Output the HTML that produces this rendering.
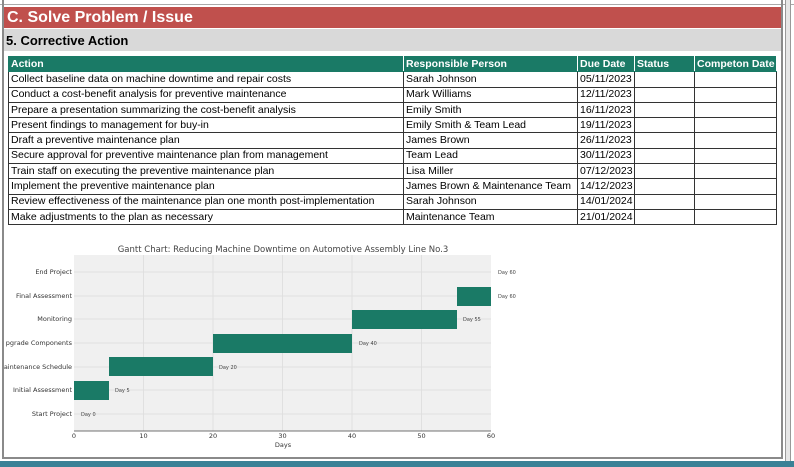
<!DOCTYPE html>
<html><head><meta charset="utf-8"><style>
*{margin:0;padding:0;box-sizing:border-box}
body{width:794px;height:467px;background:#fff;font-family:"Liberation Sans",Calibri,sans-serif;position:relative;overflow:hidden}
.frame{position:absolute;left:2px;top:0;width:781px;height:459px;border-left:2px solid #8a8a8a;border-right:2px solid #8a8a8a;border-bottom:2px solid #8a8a8a}
.topline{position:absolute;left:0;top:0;width:794px;height:5px;background:#fff;border-bottom:1px solid #aaa}
.red{position:absolute;left:4px;top:7px;width:777px;height:21px;background:#c0504d;color:#fff;font-weight:bold;font-size:16px;line-height:21px;padding-left:3px}
.gray{position:absolute;left:4px;top:29px;width:777px;height:22px;background:#d9d9d9;font-weight:bold;font-size:13px;line-height:24px;padding-left:2px}
table{position:absolute;left:8px;top:56px;width:768px;border-collapse:collapse;font-size:10.5px;table-layout:fixed}
td{border:1px solid #333;height:15.3px;line-height:13px;padding:0 2px;white-space:nowrap;overflow:hidden}
tr.h td{background:#1a7a66;color:#fff;font-weight:bold;border-color:#1a7a66;border-right:1px solid #fff}
.rs{position:absolute;left:785px;top:0;width:6px;height:467px;background:#e6e6e6;border-left:1px solid #999;border-right:1px solid #999}
.teal{position:absolute;left:0;top:461px;width:794px;height:6px;background:#3a8196}
</style></head><body>
<div class="topline"></div>
<div class="frame"></div>
<div class="rs"></div>
<div class="red">C. Solve Problem / Issue</div>
<div class="gray">5. Corrective Action</div>
<table>
<colgroup><col style="width:395px"><col style="width:174px"><col style="width:57px"><col style="width:60px"><col style="width:82px"></colgroup>
<tr class="h"><td>Action</td><td>Responsible Person</td><td>Due Date</td><td>Status</td><td>Competon Date</td></tr>
<tr><td>Collect baseline data on machine downtime and repair costs</td><td>Sarah Johnson</td><td>05/11/2023</td><td></td><td></td></tr>
<tr><td>Conduct a cost-benefit analysis for preventive maintenance</td><td>Mark Williams</td><td>12/11/2023</td><td></td><td></td></tr>
<tr><td>Prepare a presentation summarizing the cost-benefit analysis</td><td>Emily Smith</td><td>16/11/2023</td><td></td><td></td></tr>
<tr><td>Present findings to management for buy-in</td><td>Emily Smith &amp; Team Lead</td><td>19/11/2023</td><td></td><td></td></tr>
<tr><td>Draft a preventive maintenance plan</td><td>James Brown</td><td>26/11/2023</td><td></td><td></td></tr>
<tr><td>Secure approval for preventive maintenance plan from management</td><td>Team Lead</td><td>30/11/2023</td><td></td><td></td></tr>
<tr><td>Train staff on executing the preventive maintenance plan</td><td>Lisa Miller</td><td>07/12/2023</td><td></td><td></td></tr>
<tr><td>Implement the preventive maintenance plan</td><td>James Brown &amp; Maintenance Team</td><td>14/12/2023</td><td></td><td></td></tr>
<tr><td>Review effectiveness of the maintenance plan one month post-implementation</td><td>Sarah Johnson</td><td>14/01/2024</td><td></td><td></td></tr>
<tr><td>Make adjustments to the plan as necessary</td><td>Maintenance Team</td><td>21/01/2024</td><td></td><td></td></tr>
</table>
<svg style="position:absolute;left:0;top:0" width="794" height="467" font-family="DejaVu Sans,sans-serif">
<rect x="74" y="255" width="417" height="176" fill="#f0f0f0"/>
<g stroke="#ddd" stroke-width="0.8">
<line x1="143.5" y1="255" x2="143.5" y2="431"/><line x1="213" y1="255" x2="213" y2="431"/><line x1="282.5" y1="255" x2="282.5" y2="431"/><line x1="352" y1="255" x2="352" y2="431"/><line x1="421.5" y1="255" x2="421.5" y2="431"/>
<line x1="74" y1="272" x2="491" y2="272"/><line x1="74" y1="296" x2="491" y2="296"/><line x1="74" y1="319" x2="491" y2="319"/><line x1="74" y1="343" x2="491" y2="343"/><line x1="74" y1="367" x2="491" y2="367"/><line x1="74" y1="390" x2="491" y2="390"/><line x1="74" y1="414" x2="491" y2="414"/>
</g>
<g fill="#1a7a66">
<rect x="74" y="381" width="35" height="19"/>
<rect x="109" y="357" width="104" height="19"/>
<rect x="213" y="334" width="139" height="19"/>
<rect x="352" y="310" width="105" height="19"/>
<rect x="457" y="287" width="34" height="19"/>
</g>
<line x1="74" y1="431" x2="491" y2="431" stroke="#444" stroke-width="0.8"/>
<text x="283" y="252" font-size="8.5" fill="#444" text-anchor="middle">Gantt Chart: Reducing Machine Downtime on Automotive Assembly Line No.3</text>
<g font-size="6.5" fill="#333" text-anchor="end">
<text x="72" y="274">End Project</text><text x="72" y="298">Final Assessment</text><text x="72" y="321">Monitoring</text><text x="72" y="345">pgrade Components</text><text x="72" y="369">aintenance Schedule</text><text x="72" y="392">Initial Assessment</text><text x="72" y="416">Start Project</text>
</g>
<g font-size="5" fill="#444">
<text x="81" y="416">Day 0</text><text x="115" y="392">Day 5</text><text x="219" y="369">Day 20</text><text x="359" y="345">Day 40</text><text x="463" y="321">Day 55</text><text x="498" y="298">Day 60</text><text x="498" y="274">Day 60</text>
</g>
<g font-size="6.5" fill="#333" text-anchor="middle">
<text x="74" y="438">0</text><text x="143.5" y="438">10</text><text x="213" y="438">20</text><text x="282.5" y="438">30</text><text x="352" y="438">40</text><text x="421.5" y="438">50</text><text x="491" y="438">60</text>
<text x="283" y="447">Days</text>
</g>
</svg>
<div class="teal"></div>
</body></html>
